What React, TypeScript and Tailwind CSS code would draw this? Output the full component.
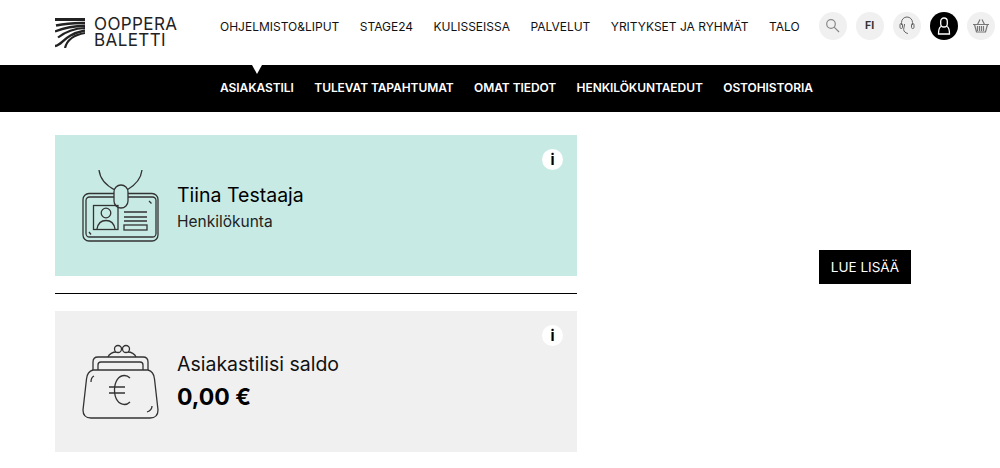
import React from 'react';

const mainNav = ['OHJELMISTO&LIPUT', 'STAGE24', 'KULISSEISSA', 'PALVELUT', 'YRITYKSET JA RYHMÄT', 'TALO'];
const subNav = ['ASIAKASTILI', 'TULEVAT TAPAHTUMAT', 'OMAT TIEDOT', 'HENKILÖKUNTAEDUT', 'OSTOHISTORIA'];

function Logo() {
  return (
    <svg width="30" height="30" viewBox="0 0 30 30" fill="none" stroke="#222">
      <path d="M0 1.500H30" strokeWidth="3" />
      <path d="M1 7.500C10 5.500 20 4.800 30 5" strokeWidth="2.600" />
      <path d="M0 13.500C9 10 19 8 30 7.800" strokeWidth="2.400" />
      <path d="M3 19.500C10 14 18 10.500 30 10" strokeWidth="2.200" />
      <path d="M0 28C8 27 8 17 30 12.500" strokeWidth="2.400" />
      <path d="M10 30C12 22 18 17 30 15" strokeWidth="2.200" />
    </svg>
  );
}

function RoundIcon({ children, dark }: { children: React.ReactNode; dark?: boolean }) {
  return (
    <div className={`flex h-7 w-7 items-center justify-center rounded-full ${dark ? 'bg-black' : 'bg-[#f0f0f0]'}`}>
      {children}
    </div>
  );
}

function InfoDot() {
  return (
    <div className="absolute right-[14px] top-[14px] flex h-[21px] w-[21px] items-center justify-center rounded-full bg-white text-[15px] font-bold leading-none text-black">
      i
    </div>
  );
}

function BadgeIcon() {
  return (
    <svg width="78" height="72" viewBox="0 0 78 72" fill="none" stroke="#333" strokeWidth="1.300">
      <path d="M17 0C18 9 25 16 33 20M60 0C59 9 52 16 45 20" />
      <rect x="1" y="23.500" width="75" height="47.500" rx="6" />
      <rect x="4" y="27" width="70" height="40" rx="3.500" />
      <rect x="32" y="15" width="14" height="23" rx="7" fill="#c7ebe4" />
      <rect x="11.500" y="35.500" width="24.500" height="24" />
      <circle cx="24" cy="43" r="4.800" />
      <path d="M15 59c1-6 5-8.500 9-8.500s8 2.500 9 8.500" />
      <path d="M42 42H65M42 47H65M42 51H65" />
      <rect x="42" y="55" width="23" height="5" />
      <path d="M67 31l2.500 2.500M7 62l2 2.500" />
    </svg>
  );
}

function PurseIcon() {
  return (
    <svg width="78" height="76" viewBox="0 0 78 76" fill="none" stroke="#333" strokeWidth="1.300">
      <circle cx="36" cy="5" r="3.500" />
      <circle cx="44" cy="5" r="3.500" />
      <path d="M26 13c1-3 5-5 8-5M54 13c-1-3-5-5-8-5" />
      <path d="M11 26v-8c0-3 2-5 5-5h45c3 0 5 2 5 5v8" />
      <path d="M16 26v-5c0-2 1-3 3-3h39c2 0 3 1 3 3v5" />
      <path d="M11 26C7 27 5 30 4.500 35L1 66c0 5 3 8 8 8h59c5 0 8-3 8-8l-3.500-31C72 30 70 27 66 26Z" />
      <path d="M9 38c0-3 1-5 3-6M70 62c0 3-2 5-5 6" />
      <path d="M48 34c-1.500-1.500-3.500-2.500-5.500-2.500-6 0-10 6-10 14.500s4 14.500 10 14.500c2 0 4-1 5.500-2.500" />
      <path d="M27 43H43M27 49H43" />
    </svg>
  );
}

export default function App() {
  return (
    <div className="h-[468px] w-[1000px] overflow-hidden bg-white font-['Inter','Liberation_Sans',sans-serif] text-black">
      <header className="flex h-[65px] items-center pl-[55px]">
        <div className="flex w-[165px] items-center gap-[9px]">
          <Logo />
          <div className="text-[17px] font-normal leading-[15.500px] tracking-[0.400px] text-[#222]">
            OOPPERA
            <br />
            BALETTI
          </div>
        </div>
        <nav className="mb-[11px] flex gap-[20.400px] whitespace-nowrap text-[12px] font-normal text-[#111]">
          {mainNav.map((item) => (
            <span key={item}>{item}</span>
          ))}
        </nav>
        <div className="mb-[14px] ml-[19px] flex gap-[9px]">
          <RoundIcon>
            <svg width="15" height="15" viewBox="0 0 15 15" fill="none" stroke="#888" strokeWidth="1.200">
              <circle cx="6" cy="6" r="4.300" />
              <path d="M9.200 9.200L14 14" />
            </svg>
          </RoundIcon>
          <RoundIcon>
            <span className="text-[10.500px] font-bold text-[#333]">FI</span>
          </RoundIcon>
          <RoundIcon>
            <svg width="16" height="19" viewBox="0 0 16 19" fill="none" stroke="#666" strokeWidth="1">
              <path d="M2.500 9V6.500a5.500 5.500 0 0 1 11 0V9" />
              <rect x="1" y="7.500" width="2.500" height="5" rx="1.200" />
              <rect x="12.500" y="7.500" width="2.500" height="5" rx="1.200" />
              <path d="M5.500 8c0 3-1.500 5-.500 7 1 1.500 3 2.500 4 2.500" />
            </svg>
          </RoundIcon>
          <RoundIcon dark>
            <svg width="14" height="18" viewBox="0 0 14 18" fill="none" stroke="#fff" strokeWidth="1.300">
              <rect x="3.700" y="1" width="6.600" height="9" rx="3.300" />
              <path d="M4 9.500C2 10.500 1.500 12 1.500 17h11c0-5-.5-6.500-2.500-7.500" />
            </svg>
          </RoundIcon>
          <RoundIcon>
            <svg width="18" height="15" viewBox="0 0 18 15" fill="none" stroke="#777" strokeWidth="1.200">
              <path d="M1 6.500H17M2.500 6.500L4.500 14H13.500L15.500 6.500M5.500 6.500L8 1.500M12.500 6.500L10 1.500M5.500 8V13M7.500 8V13M9.500 8V13M11.500 8V13" />
            </svg>
          </RoundIcon>
        </div>
      </header>

      <nav className="relative flex h-[47px] items-center gap-[20.500px] whitespace-nowrap bg-black pb-[1px] pl-[220px] text-[12px] font-semibold tracking-[-0.080px] text-white">
        <span className="absolute left-[252px] top-0 h-0 w-0 border-x-[5px] border-t-[9px] border-x-transparent border-t-white" />
        {subNav.map((item) => (
          <span key={item}>{item}</span>
        ))}
      </nav>

      <main className="flex pl-[55px] pt-[23px]">
        <div className="flex w-[522px] flex-col">
          <section className="relative flex h-[141px] items-center gap-[17px] bg-[#c7ebe4] pl-[27px]">
            <InfoDot />
            <BadgeIcon />
            <div className="mt-[2px]">
              <div className="text-[19.500px] font-normal leading-[28px]">Tiina Testaaja</div>
              <div className="mt-[2px] text-[15.500px] leading-[22px] text-[#222]">Henkilökunta</div>
            </div>
          </section>
          <hr className="my-[17px] border-t border-black" />
          <section className="relative flex h-[141px] items-center gap-[17px] bg-[#f0f0f0] pl-[27px]">
            <InfoDot />
            <PurseIcon />
            <div className="mt-[1px]">
              <div className="text-[19.500px] font-normal leading-[26px] text-[#111]">Asiakastilisi saldo</div>
              <div className="mt-[4px] text-[23px] font-bold leading-[32px]">0,00 €</div>
            </div>
          </section>
        </div>
        <div className="flex flex-1 justify-end pr-[89px] pt-[115px]">
          <button className="h-[34px] w-[92px] self-start bg-black text-[13.500px] font-normal text-white">LUE LISÄÄ</button>
        </div>
      </main>
    </div>
  );
}
